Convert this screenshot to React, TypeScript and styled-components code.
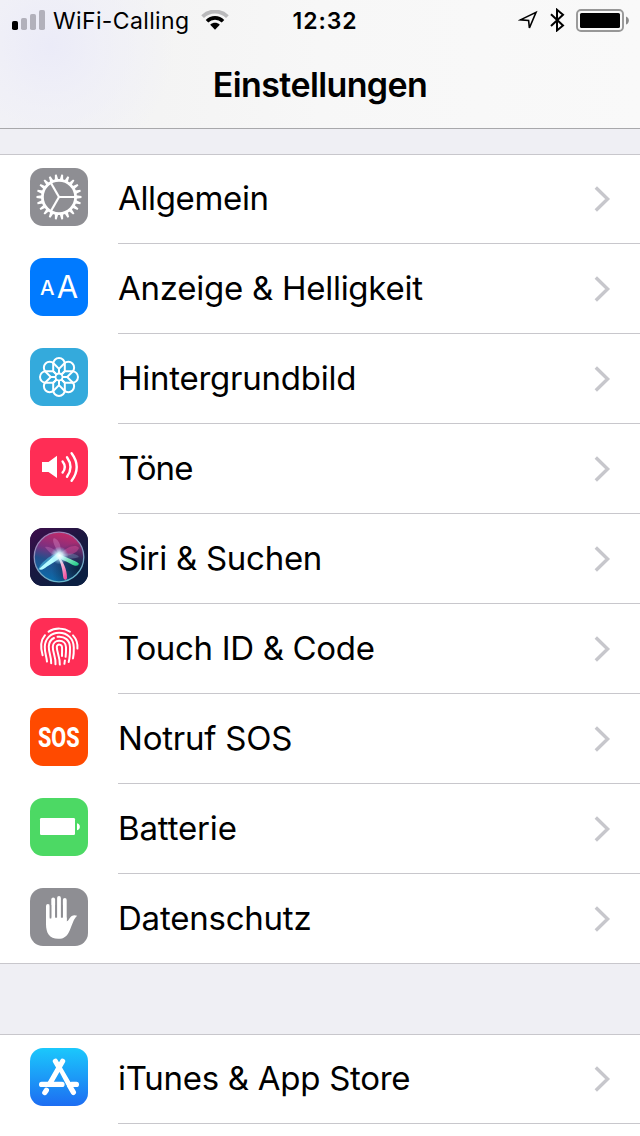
import React from 'react';
import styled, { createGlobalStyle } from 'styled-components';

const GlobalStyle = createGlobalStyle`
  * { box-sizing: border-box; }
  html, body { margin: 0; padding: 0; background: #efeff4; }
  body {
    font-family: Inter, "Liberation Sans", sans-serif;
    color: #000;
    overflow: hidden;
  }
  svg { display: block; }
`;

const Screen = styled.div`
  width: 640px;
  height: 1136px;
  overflow: hidden;
  display: flex;
  flex-direction: column;
  background: #efeff4;
`;

const Header = styled.header`
  height: 129px;
  flex: none;
  border-bottom: 1px solid #a8a8ab;
  background:
    radial-gradient(circle at 50px 46px, #ebebf8 0, rgba(238, 238, 248, 0.7) 55px, rgba(243, 243, 246, 0) 125px),
    linear-gradient(90deg, #f3f3f5 0, #f4f4f4 160px, #f7f7f7 320px, #f9f9f9 640px);
`;

const StatusBar = styled.div`
  height: 40px;
  display: grid;
  grid-template-columns: 1fr auto 1fr;
  grid-template-rows: 40px;
  align-items: center;
  padding: 0 11px 0 12px;
`;

const StatusSide = styled.div<{ $end?: boolean }>`
  display: flex;
  align-items: center;
  justify-content: ${(p) => (p.$end ? 'flex-end' : 'flex-start')};
`;

const StatusText = styled.span`
  font-size: 23px;
  line-height: 38px;
  padding-top: 2px;
  white-space: nowrap;
`;

const Carrier = styled(StatusText)`
  letter-spacing: 0.36px;
  margin: 0 12px 0 8px;
`;

const Clock = styled(StatusText)`
  font-weight: 600;
  letter-spacing: 0.9px;
  padding-left: 9px;
`;

const Title = styled.h1`
  margin: 0;
  height: 88px;
  line-height: 89px;
  text-align: center;
  font-size: 34px;
  font-weight: 600;
  letter-spacing: -0.62px;
`;

const Group = styled.section<{ $gap: number }>`
  flex: none;
  margin-top: ${(p) => p.$gap}px;
  background: #fff;
  box-shadow: inset 0 1px #c8c7cc;
`;

const Row = styled.div<{ $end?: boolean }>`
  height: 90px;
  display: flex;
  padding-left: 30px;
  border-bottom: ${(p) => (p.$end ? '1px solid #c8c7cc' : '0')};
`;

const Tile = styled.div<{ $bg: string }>`
  width: 58px;
  height: 58px;
  flex: none;
  margin: 14px 30px 0 0;
  border-radius: 13px;
  overflow: hidden;
  background: ${(p) => p.$bg};
`;

const RowBody = styled.div<{ $line: boolean }>`
  flex: 1;
  display: flex;
  align-items: center;
  justify-content: space-between;
  padding-right: 29px;
  border-bottom: ${(p) => (p.$line ? '1px solid #c8c7cc' : '0')};
`;

const Label = styled.span<{ $track: number }>`
  font-size: 33px;
  line-height: 86px;
  padding-bottom: 2px;
  display: block;
  letter-spacing: ${(p) => p.$track}px;
  white-space: nowrap;
`;

const Chevron = () => (
  <svg width="18" height="28" viewBox="0 0 18 28" fill="none" stroke="#c7c7cc" strokeWidth="3.4">
    <path d="M2.8 2.5 14.6 14 2.8 25.5" />
  </svg>
);

const Icon = ({ children }: { children: React.ReactNode }) => (
  <svg width="58" height="58" viewBox="0 0 58 58" fill="none">
    {children}
  </svg>
);

const teeth = Array.from({ length: 22 }, (_, i) => (i * 360) / 22);
const petals = Array.from({ length: 8 }, (_, i) => i * 45);

const Gear = () => (
  <Icon>
    <circle cx="29" cy="29" r="16.6" stroke="#fff" strokeWidth="2.8" />
    {teeth.map((a) => (
      <path key={a} d="M46 27.2 51.5 28.1V29.9L46 30.8Z" fill="#fff" transform={`rotate(${a} 29 29)`} />
    ))}
    {[0, 120, 240].map((a) => (
      <path key={a} d="M29 29H46" stroke="#fff" strokeWidth="2.2" transform={`rotate(${a} 29 29)`} />
    ))}
  </Icon>
);

const LetterGlyph = styled.text`
  font-family: Inter, sans-serif;
  fill: #fff;
  text-anchor: middle;
`;

const Letters = () => (
  <Icon>
    <LetterGlyph x="17.3" y="37" fontSize="20.5" fontWeight="500">A</LetterGlyph>
    <LetterGlyph x="37.5" y="39.8" fontSize="31" fontWeight="400">A</LetterGlyph>
  </Icon>
);

const Flower = () => (
  <Icon>
    {petals.map((a) => (
      <path
        key={a}
        d="M26.8 26.8 23.2 23.2V15.8A5.8 5.8 0 0 1 34.8 15.8V23.2L31.2 26.8"
        stroke="#fff"
        strokeWidth="2"
        transform={`rotate(${a} 29 29)`}
      />
    ))}
    <circle cx="29" cy="29" r="3.5" stroke="#fff" strokeWidth="1.8" />
  </Icon>
);

const Speaker = () => (
  <Icon>
    <path d="M12 24H18.5L27 17.8V40L18.5 34H12Z" fill="#fff" />
    <g stroke="#fff" strokeWidth="2.4" strokeLinecap="round">
      <path d="M32.6 23.4Q37 29 32.6 34.6" />
      <path d="M37 19.2Q44 29 37 38.8" />
      <path d="M41.6 15.2Q51.8 29 41.6 42.8" />
    </g>
  </Icon>
);

const Siri = () => (
  <Icon>
    <defs>
      <linearGradient id="siriBack" x1="0" y1="0" x2="0.6" y2="1">
        <stop offset="0" stopColor="#3f0d4c" />
        <stop offset="0.5" stopColor="#1b1740" />
        <stop offset="1" stopColor="#0b1f42" />
      </linearGradient>
      <linearGradient id="siriOrb" x1="0.6" y1="0" x2="0.35" y2="1">
        <stop offset="0" stopColor="#c32a68" />
        <stop offset="0.36" stopColor="#7c3080" />
        <stop offset="0.6" stopColor="#234f8c" />
        <stop offset="1" stopColor="#0b6cab" />
      </linearGradient>
      <radialGradient id="siriShade" cx="0.9" cy="0.75" r="0.55">
        <stop offset="0" stopColor="#0a2340" />
        <stop offset="1" stopColor="#0a2340" stopOpacity="0" />
      </radialGradient>
      <radialGradient id="siriCore">
        <stop offset="0" stopColor="#fff" />
        <stop offset="0.35" stopColor="#d8fbff" stopOpacity="0.85" />
        <stop offset="1" stopColor="#8adcff" stopOpacity="0" />
      </radialGradient>
      <linearGradient id="siriRing" x1="0.3" y1="0" x2="0.6" y2="1">
        <stop offset="0" stopColor="#a67bb4" />
        <stop offset="1" stopColor="#66b8cc" />
      </linearGradient>
      <linearGradient id="siriPink" x1="0.2" y1="0" x2="0.7" y2="1">
        <stop offset="0" stopColor="#fff" />
        <stop offset="1" stopColor="#f0519f" />
      </linearGradient>
      <linearGradient id="siriGreen" x1="0" y1="0" x2="1" y2="1">
        <stop offset="0" stopColor="#e9ffff" />
        <stop offset="1" stopColor="#14c77f" />
      </linearGradient>
    </defs>
    <rect width="58" height="58" fill="url(#siriBack)" />
    <circle cx="29" cy="29" r="24.5" fill="url(#siriOrb)" />
    <circle cx="29" cy="29" r="24.5" fill="url(#siriShade)" />
    <path d="M29 28C26 22 20 18 15 19C18 23 22 28 29 28Z" fill="#d47cc0" opacity="0.35" />
    <path d="M29 27C26 20 21 12 24 10C30 12 32 20 30 28Z" fill="#d98ac9" opacity="0.4" />
    <path d="M29 27C37 18 46 16 49 20C47 25 40 28 30 29Z" fill="#d64c98" opacity="0.5" />
    <path d="M30 27C40 24 47 26 49 29C43 31 36 31 30 29Z" fill="#7fa6c8" opacity="0.35" />
    <path d="M29 24C19 28 10 35 8 42C16 40 26 34 31 28Z" fill="#55cfee" opacity="0.5" />
    <path d="M28 25C21 30 14 36.5 9 41C11 43 14 41 17 38.6C23 34.5 28 32 32 28Z" fill="#b5fbff" />
    <path d="M29 26C37 30.4 45 32 48.8 35.6C48.8 39 44 38 41 36C36 33 31 32 28 29Z" fill="url(#siriGreen)" />
    <path d="M28 27C33 33 37.4 42 37 50C36.4 53 33.6 52 33.2 49C32.6 42 31 34 27 28Z" fill="url(#siriPink)" />
    <circle cx="29.5" cy="27.5" r="9" fill="url(#siriCore)" />
    <circle cx="29" cy="29" r="24.8" stroke="url(#siriRing)" strokeWidth="1.3" />
  </Icon>
);

const Fingerprint = () => (
  <Icon>
    <g stroke="#fff" strokeWidth="2" strokeLinecap="round">
      <path d="M18.6 13.6C25 9.6 34 9.6 40 13.8" />
      <path d="M12.6 37.2C10.3 29.5 10.4 22.6 15 17.2" />
      <path d="M43 17.4C46.6 21.2 47.8 25.6 47.4 30.6" />
      <path d="M17 43.6C16.6 38.6 14.6 34.6 14.8 28.8C15 20.4 21.2 14.8 29 14.8C37.6 14.8 43.6 20.8 43.8 29.4C43.9 33.4 43.7 37 43 40.4" />
      <path d="M21.2 45.2C21.4 38.4 18.6 34.6 18.8 28.4C19 24.4 20.8 21.6 24 20" />
      <path d="M27.6 18.8C34.8 17.8 39.8 22.6 40 29C40.1 34.8 39.8 39.8 38.7 44" />
      <path d="M25.5 46.2C26 39 22.6 34.6 22.8 28.8C23 25.2 25.6 22.8 29.2 22.8C33.2 22.8 35.8 25.4 36 29.2C36.1 32.6 36 35.4 35.6 38.8" />
      <path d="M29.8 46.6C30.2 39.6 26.8 34.8 26.8 29C26.8 25.8 31.8 25.8 32 29.2C32.2 31.6 32 34 32 38" />
      <path d="M34.9 42.4 34.4 45.8" />
    </g>
  </Icon>
);

const SosText = styled.text`
  font-family: Roboto, "Liberation Sans", sans-serif;
  font-weight: 800;
  font-size: 26px;
  text-anchor: middle;
  fill: #fff;
`;

const Sos = () => (
  <Icon>
    <SosText transform="translate(28.8 38.6) scale(0.83 1.04)">SOS</SosText>
  </Icon>
);

const BatteryTile = () => (
  <Icon>
    <rect x="10" y="20" width="35" height="17" rx="1.2" fill="#fff" />
    <path d="M47 25.2C50.8 25.6 50.8 31.8 47 32.2Z" fill="#fff" />
  </Icon>
);

const Hand = () => (
  <Icon>
    <g stroke="#fff" strokeLinecap="round" strokeWidth="3.8">
      <path d="M17.9 18V34" />
      <path d="M23.2 11.4V32" />
      <path d="M29 10V32" />
      <path d="M34.8 12V32" />
    </g>
    <path
      d="M16 29.5 H36.7V33.2C37.6 33.4 38.4 32 39.6 30.2C41.4 27.6 43.8 26.4 47.2 27.8C43.6 30.6 42.4 36.6 39.7 42.4C37.2 48.2 34 50.8 28.2 50.8C19.4 50.8 16 45 16 36Z"
      fill="#fff"
    />
    <path d="M20.5 17V30.4M26.1 17V29.6M31.9 17V29.6" stroke="#8e8e93" strokeWidth="1.6" />
  </Icon>
);

const AppStore = () => (
  <Icon>
    <path d="M25.4 13.2 43.4 44.4" stroke="#fff" strokeWidth="5.2" strokeLinecap="round" />
    <path d="M28.9 24.4 36.4 38.6" stroke="#1f9bf8" strokeWidth="1.4" />
    <g stroke="#fff" strokeWidth="5.2" strokeLinecap="round">
      <path d="M32.6 13.2 19.6 36" />
      <path d="M16.4 42.2 14.8 44.6" />
      <path d="M11.6 36.4H32" />
      <path d="M41.6 36.4H46.4" />
    </g>
  </Icon>
);

const rows = [
  { label: 'Allgemein', track: -0.35, bg: '#8e8e93', icon: <Gear /> },
  { label: 'Anzeige & Helligkeit', track: -0.26, bg: '#007aff', icon: <Letters /> },
  { label: 'Hintergrundbild', track: -0.25, bg: '#34aadc', icon: <Flower /> },
  { label: 'Töne', track: -0.9, bg: '#ff2d55', icon: <Speaker /> },
  { label: 'Siri & Suchen', track: -0.28, bg: '#1b1740', icon: <Siri /> },
  { label: 'Touch ID & Code', track: -0.33, bg: '#ff2d55', icon: <Fingerprint /> },
  { label: 'Notruf SOS', track: -0.22, bg: '#ff4a00', icon: <Sos /> },
  { label: 'Batterie', track: -0.16, bg: '#4cd964', icon: <BatteryTile /> },
  { label: 'Datenschutz', track: -0.22, bg: '#8e8e93', icon: <Hand /> },
];

const Signal = () => (
  <svg width="33" height="20" viewBox="0 0 33 20">
    <rect x="0" y="11" width="6" height="9" rx="1.8" fill="#000" />
    <rect x="9" y="8" width="6" height="12" rx="1.8" fill="#b2b1bb" />
    <rect x="18" y="4" width="6" height="16" rx="1.8" fill="#b2b1bb" />
    <rect x="27" y="0" width="6" height="20" rx="1.8" fill="#b2b1bb" />
  </svg>
);

const Wifi = () => (
  <svg width="28" height="20" viewBox="0 0 28 20">
    <path d="M1.6 6.6C8.4-.2 19.6-.2 26.4 6.6" fill="none" stroke="#b9b9bb" strokeWidth="3.8" />
    <path d="M6 11.2C10.4 6.8 17.6 6.8 22 11.2" fill="none" stroke="#000" strokeWidth="3.6" />
    <path d="M9.2 14.8C12 12.2 16 12.2 18.8 14.8L14 19.8Z" fill="#000" />
  </svg>
);

const StatusIcons = () => (
  <svg width="111" height="24" viewBox="518 8 111 24" fill="none">
    <path d="M520.4 19.9 536 12.4 529.4 28 528.6 20.4Z" stroke="#000" strokeWidth="1.6" />
    <path d="M551 14.2 563 25.4 557 30.4V9.8L563 14.8 551 26" stroke="#000" strokeWidth="2" />
    <rect x="577" y="10" width="46" height="21" rx="4" stroke="#979797" strokeWidth="1.9" />
    <rect x="580" y="13" width="40" height="15" rx="1.6" fill="#000" />
    <path d="M626 16.4C629.8 17.6 629.8 23.4 626 24.6Z" fill="#8a8a8a" />
  </svg>
);

export default function App() {
  return (
    <>
      <GlobalStyle />
      <Screen>
        <Header>
          <StatusBar>
            <StatusSide>
              <Signal />
              <Carrier>WiFi-Calling</Carrier>
              <Wifi />
            </StatusSide>
            <Clock>12:32</Clock>
            <StatusSide $end>
              <StatusIcons />
            </StatusSide>
          </StatusBar>
          <Title>Einstellungen</Title>
        </Header>
        <Group $gap={25}>
          {rows.map((r, i) => (
            <Row key={r.label} $end={i === rows.length - 1}>
              <Tile $bg={r.bg}>{r.icon}</Tile>
              <RowBody $line={i < rows.length - 1}>
                <Label $track={r.track}>{r.label}</Label>
                <Chevron />
              </RowBody>
            </Row>
          ))}
        </Group>
        <Group $gap={70}>
          <Row>
            <Tile $bg="linear-gradient(#1bc8fc, #1d6df2)">
              <AppStore />
            </Tile>
            <RowBody $line>
              <Label $track={-0.28}>iTunes &amp; App Store</Label>
              <Chevron />
            </RowBody>
          </Row>
          <Row />
        </Group>
      </Screen>
    </>
  );
}
